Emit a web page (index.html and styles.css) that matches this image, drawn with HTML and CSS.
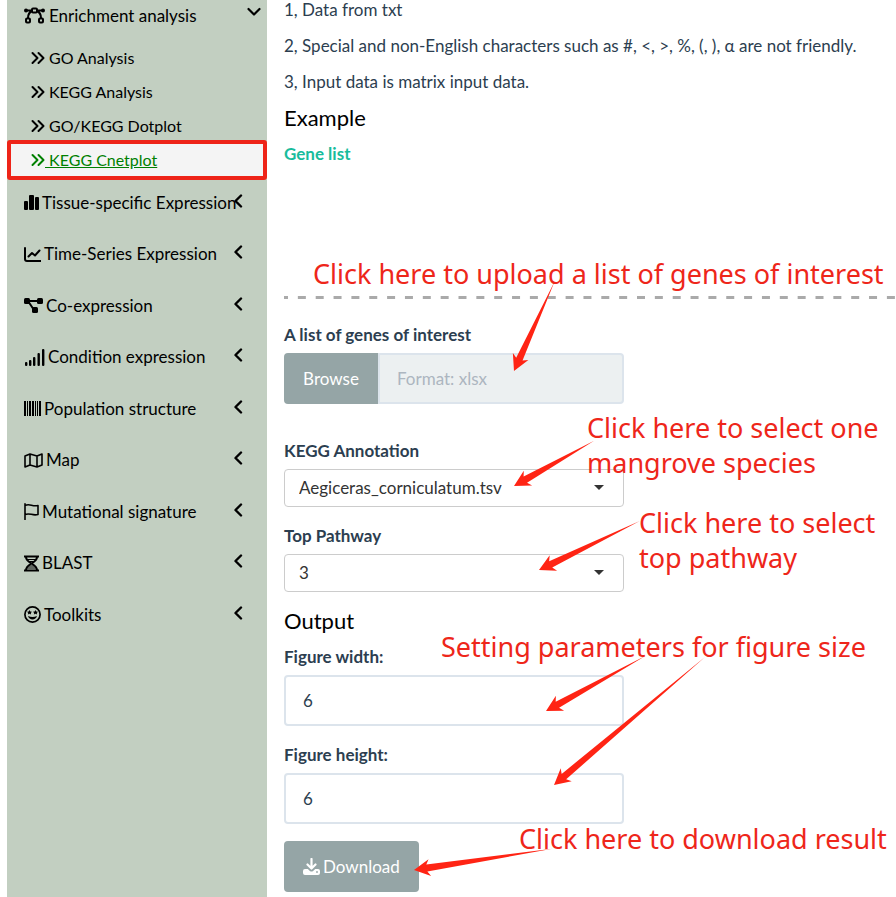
FILE: index.html
```html
<!DOCTYPE html>
<html lang="en">
<head>
<meta charset="utf-8">
<title>KEGG Cnetplot</title>
<link rel="stylesheet" href="styles.css">
</head>
<body>
<svg class="defs" aria-hidden="true">
  <symbol id="left" viewBox="0 0 10 14"><path d="M8 1.500 2.500 7 8 12.500" fill="none" stroke="currentColor" stroke-width="2.400" stroke-linecap="round" stroke-linejoin="round"/></symbol>
  <symbol id="more" viewBox="0 0 14 14"><path d="M1.500 2l5 5-5 5M7.500 2l5 5-5 5" fill="none" stroke="currentColor" stroke-width="2" stroke-linecap="round" stroke-linejoin="round"/></symbol>
</svg>
<div class="layout">
  <nav class="sidebar">
    <a class="item open" href="#">
      <svg class="w21" viewBox="0 0 21 17" aria-hidden="true"><g fill="none" stroke="currentColor" stroke-width="2"><path d="M2 3.500h6M13 3.500h6M8 4C5 5.500 4 8 4 11M13 4c3 1.500 4 4 4 7"/><rect x="8" y="1.500" width="5" height="4" rx="1"/><rect x="2" y="11.500" width="4" height="4" rx="1"/><rect x="15" y="11.500" width="4" height="4" rx="1"/></g><circle cx="2" cy="3.500" r="2"/><circle cx="19" cy="3.500" r="2"/></svg>
      <span>Enrichment analysis</span>
      <svg class="down" viewBox="0 0 14 10" aria-hidden="true"><path d="M1.500 2 7 7.500 12.500 2" fill="none" stroke="currentColor" stroke-width="2.200" stroke-linecap="round" stroke-linejoin="round"/></svg>
    </a>
    <div class="submenu">
      <a href="#"><svg class="w14"><use href="#more"/></svg><span>GO Analysis</span></a>
      <a href="#"><svg class="w14"><use href="#more"/></svg><span>KEGG Analysis</span></a>
      <a href="#"><svg class="w14"><use href="#more"/></svg><span>GO/KEGG Dotplot</span></a>
      <a class="active" href="#"><svg class="w14"><use href="#more"/></svg><span>&nbsp;KEGG Cnetplot</span></a>
    </div>
    <a class="item" href="#">
      <svg class="w15" viewBox="0 0 15 17" aria-hidden="true"><rect y="7" width="4" height="9" rx="1"/><rect x="5" y="1" width="5" height="15" rx="1"/><rect x="11" y="3" width="4" height="13" rx="1"/></svg>
      <span>Tissue-specific Expression</span><svg class="chev"><use href="#left"/></svg>
    </a>
    <a class="item" href="#">
      <svg class="w17" viewBox="0 0 17 17" aria-hidden="true"><path d="M1 2v11q0 2 2 2h13.500M4.500 10.500 8 7l3 2.500 4.500-5" fill="none" stroke="currentColor" stroke-width="2" stroke-linecap="round" stroke-linejoin="round"/></svg>
      <span>Time-Series Expression</span><svg class="chev"><use href="#left"/></svg>
    </a>
    <a class="item" href="#">
      <svg class="w19" viewBox="0 0 19 17" aria-hidden="true"><path d="M3 4h13M4 4l6 9" fill="none" stroke="currentColor" stroke-width="2"/><rect y="1" width="6" height="6" rx="1.500"/><rect x="13" y="1" width="6" height="6" rx="1.500"/><rect x="8" y="10" width="6" height="6" rx="1.500"/></svg>
      <span>Co-expression</span><svg class="chev"><use href="#left"/></svg>
    </a>
    <a class="item" href="#">
      <svg class="w21" viewBox="0 0 21 17" aria-hidden="true"><rect x="1" y="13" width="2.400" height="4" rx="1"/><rect x="5" y="11" width="2.400" height="6" rx="1"/><rect x="9" y="8" width="2.400" height="9" rx="1"/><rect x="13.500" y="4" width="2.400" height="13" rx="1"/><rect x="18" y="0" width="2.400" height="17" rx="1"/></svg>
      <span>Condition expression</span><svg class="chev"><use href="#left"/></svg>
    </a>
    <a class="item" href="#">
      <svg class="w17" viewBox="0 0 17 17" aria-hidden="true"><path d="M0 1h2v15H0zM3 1h1v15H3zM5 1h2v15H5zM8 1h2v15H8zM11 1h1v15h-1zM13 1h1v15h-1zM15 1h2v15h-2z"/></svg>
      <span>Population structure</span><svg class="chev"><use href="#left"/></svg>
    </a>
    <a class="item" href="#">
      <svg class="w19" viewBox="0 0 19 17" aria-hidden="true"><path d="M1 4v11l5-2 7 2 5-2V2l-5 2-7-2zM6 2v11M13 4v11" fill="none" stroke="currentColor" stroke-width="1.600" stroke-linejoin="round"/></svg>
      <span>Map</span><svg class="chev"><use href="#left"/></svg>
    </a>
    <a class="item" href="#">
      <svg class="w15" viewBox="0 0 15 17" aria-hidden="true"><path d="M1 .8v15.700M1 2.500c5-2.500 7 1.500 13 0v9c-6 1.500-8-2-13 0" fill="none" stroke="currentColor" stroke-width="1.600" stroke-linecap="round" stroke-linejoin="round"/></svg>
      <span>Mutational signature</span><svg class="chev"><use href="#left"/></svg>
    </a>
    <a class="item" href="#">
      <svg class="w15" viewBox="0 0 15 17" aria-hidden="true"><path d="M0 1.500h15M0 15.500h15M2 2c0 6.500 11 6.500 11 13M13 2c0 6.500-11 6.500-11 13" fill="none" stroke="currentColor" stroke-width="2"/><path d="M3 4.500h9M5 6.500h5M5 11h5M3 13h9" fill="none" stroke="currentColor" stroke-width="1"/></svg>
      <span>BLAST</span><svg class="chev"><use href="#left"/></svg>
    </a>
    <a class="item" href="#">
      <svg class="w17" viewBox="0 0 17 17" aria-hidden="true"><circle cx="8.500" cy="8.500" r="7.600" fill="none" stroke="currentColor" stroke-width="1.700"/><path d="m5.500 4 .8 1.500 1.700.2-1.200 1.200.3 1.700-1.600-.8-1.600.8.300-1.700L3 5.700l1.700-.2zM11.500 4l.8 1.500 1.700.2-1.200 1.200.3 1.700-1.600-.8-1.600.8.300-1.700L9 5.700l1.700-.2zM4 10q4.500 2 9 0c-1 4.500-8 4.500-9 0z"/></svg>
      <span>Toolkits</span><svg class="chev"><use href="#left"/></svg>
    </a>
  </nav>
  <main class="content">
    <div class="notes">
      <p>1, Data from txt</p>
      <p>2, Special and non-English characters such as #, &lt;, &gt;, %, (, ), α are not friendly.</p>
      <p>3, Input data is matrix input data.</p>
    </div>
    <h4>Example</h4>
    <a class="gene" href="#">Gene list</a>
    <svg class="divider" aria-hidden="true"><line x1="0" y1="1.500" x2="100%" y2="1.500" stroke="#aaa" stroke-width="3" stroke-dasharray="8 9.850" stroke-dashoffset="4"/></svg>
    <form class="form">
      <div class="field upload">
        <label for="genes">A list of genes of interest</label>
        <div class="file"><button type="button">Browse</button><input id="genes" type="text" placeholder="Format: xlsx" readonly></div>
      </div>
      <div class="field">
        <label for="kegg">KEGG Annotation</label>
        <div class="pick"><select id="kegg"><option>Aegiceras_corniculatum.tsv</option></select></div>
      </div>
      <div class="field">
        <label for="top">Top Pathway</label>
        <div class="pick"><select id="top"><option>3</option></select></div>
      </div>
      <h4>Output</h4>
      <div class="field">
        <label for="fw">Figure width:</label>
        <input class="box" id="fw" type="text" value="6">
      </div>
      <div class="field">
        <label for="fh">Figure height:</label>
        <input class="box" id="fh" type="text" value="6">
      </div>
      <button class="download" type="button"><svg class="w17" viewBox="0 0 17 17" aria-hidden="true"><path d="M8.500 1v8.500M4.500 6.500l4 4 4-4" fill="none" stroke="currentColor" stroke-width="2.200" stroke-linecap="round" stroke-linejoin="round"/><path d="M2 11h2.800l2.100 2q1.600 1.200 3.200 0l2.100-2H15q2 0 2 2v2q0 2-2 2H2q-2 0-2-2v-2q0-2 2-2z"/><circle cx="14" cy="14" r=".9" fill="#95a5a6"/></svg><span>Download</span></button>
    </form>
  </main>
  <svg class="arrows" aria-hidden="true">
    <g transform="translate(514 371) rotate(-65.600)"><path d="M0 0 16-8.500 13-3.500 98 0 13 3.500 16 8.500z"/></g>
    <g transform="translate(514 486) rotate(-29.400)"><path d="M0 0 16-8.500 13-3.500 92 0 13 3.500 16 8.500z"/></g>
    <g transform="translate(539 570) rotate(-25.900)"><path d="M0 0 16-8.500 13-3.500 112 0 13 3.500 16 8.500z"/></g>
    <g transform="translate(546 711) rotate(-29)"><path d="M0 0 16-8.500 13-3.500 114 0 13 3.500 16 8.500z"/></g>
    <g transform="translate(554 785) rotate(-40.300)"><path d="M0 0 16-8.500 13-3.500 198 0 13 3.500 16 8.500z"/></g>
    <g transform="translate(414 870) rotate(-8.700)"><path d="M0 0 16-8.500 13-3.500 140 0 13 3.500 16 8.500z"/></g>
  </svg>
  <p class="callout c1">Click here to upload a list of genes of interest</p>
  <p class="callout c2">Click here to select one<br>mangrove species</p>
  <p class="callout c3">Click here to select<br>top pathway</p>
  <p class="callout c4">Setting parameters for figure size</p>
  <p class="callout c5">Click here to download result</p>
</div>
</body>
</html>
```
FILE: styles.css
```css
* { box-sizing: border-box; }
body {
  margin: 0;
  background: #fff;
  color: #2c3e50;
  font: 17px/24px Lato, "Liberation Sans", sans-serif;
}
p, h4 { margin: 0; }
svg { fill: currentColor; flex: none; }
.defs { position: absolute; width: 0; height: 0; }
.layout { position: relative; display: flex; min-height: 100vh; padding-left: 7px; overflow: hidden; }

.sidebar { flex: 0 0 260px; background: #c2cfc1; color: #000; }
.sidebar a { position: relative; display: flex; align-items: center; color: inherit; text-decoration: none; white-space: nowrap; }
.item { height: 51px; padding-left: 17px; gap: 3px; }
.item:nth-of-type(odd) { height: 52px; }
.item.open { height: 31px; gap: 4px; }
.w14 { width: 14px; height: 14px; }
.w15 { width: 15px; height: 17px; }
.w17 { width: 17px; height: 17px; }
.w19 { width: 19px; height: 17px; }
.w21 { width: 21px; height: 17px; }
.chev { position: absolute; right: 24px; top: 17px; width: 10px; height: 14px; }
.down { position: absolute; right: 6px; top: 7px; width: 14px; height: 10px; }
.submenu { padding-top: 10px; font-size: 16px; }
.submenu a { height: 34px; padding-left: 24px; gap: 4px; }
.submenu a.active { gap: 0; background: #f4f4f4; color: #008000; }
.submenu .active::after {
  content: "";
  position: absolute;
  inset: -3px 0;
  border: 4px solid #ee2418;
  border-radius: 3px;
}
.submenu .active span { text-decoration: underline; }

.content { flex: 1; min-width: 0; padding-left: 17px; }
.notes { display: grid; gap: 16px; line-height: 20px; }
h4 { font-size: 22px; font-weight: 400; line-height: 24px; color: #000; }
.notes + h4 { margin-top: 14px; }
.gene { display: block; margin-top: 14px; line-height: 20px; font-weight: 700; color: #18bc9c; text-decoration: none; }
.divider { display: block; width: 100%; height: 3px; margin: 132px 0 24px; }

.form { max-width: 340px; }
.field { display: flex; flex-direction: column; gap: 6px; margin-bottom: 17px; }
.field.upload { margin-bottom: 35px; }
label { font-weight: 700; }
input, select, button { font: inherit; color: inherit; margin: 0; }
.file { display: flex; height: 51px; }
.file button { width: 94px; border: 0; border-radius: 4px 0 0 4px; background: #95a5a6; color: #fff; }
.file input { flex: 1; min-width: 0; padding: 0 17px; border: 2px solid #dce4ec; border-radius: 0 4px 4px 0; background: #ecf0f1; }
.file input::placeholder { color: #acb6c0; opacity: 1; }
.pick { position: relative; }
.pick::after {
  content: "";
  position: absolute;
  right: 20px;
  top: 16px;
  border: 5px solid transparent;
  border-top-color: #333;
  border-bottom: 0;
}
.pick select { display: block; width: 100%; height: 38px; padding: 0 14px; border: 1px solid #ccc; border-radius: 4px; background: #fff; color: #333; appearance: none; }
.form h4 { margin-bottom: 12px; }
.box { width: 100%; height: 51px; padding: 0 17px; border: 2px solid #dce4ec; border-radius: 4px; background: #fff; }
.download { display: flex; align-items: center; gap: 3px; height: 51px; padding: 0 19px; border: 0; border-radius: 4px; background: #95a5a6; color: #fff; }

.arrows { position: absolute; left: 0; top: 0; width: 100%; height: 100%; fill: #ff2414; pointer-events: none; }
.callout { position: absolute; color: #ee261a; font: 27px/35px "Noto Sans", "Open Sans", sans-serif; white-space: nowrap; }
.c1 { left: 313px; top: 256px; }
.c2 { left: 587px; top: 410px; }
.c3 { left: 639px; top: 505px; }
.c4 { left: 441px; top: 629px; }
.c5 { left: 519px; top: 821px; }
```
